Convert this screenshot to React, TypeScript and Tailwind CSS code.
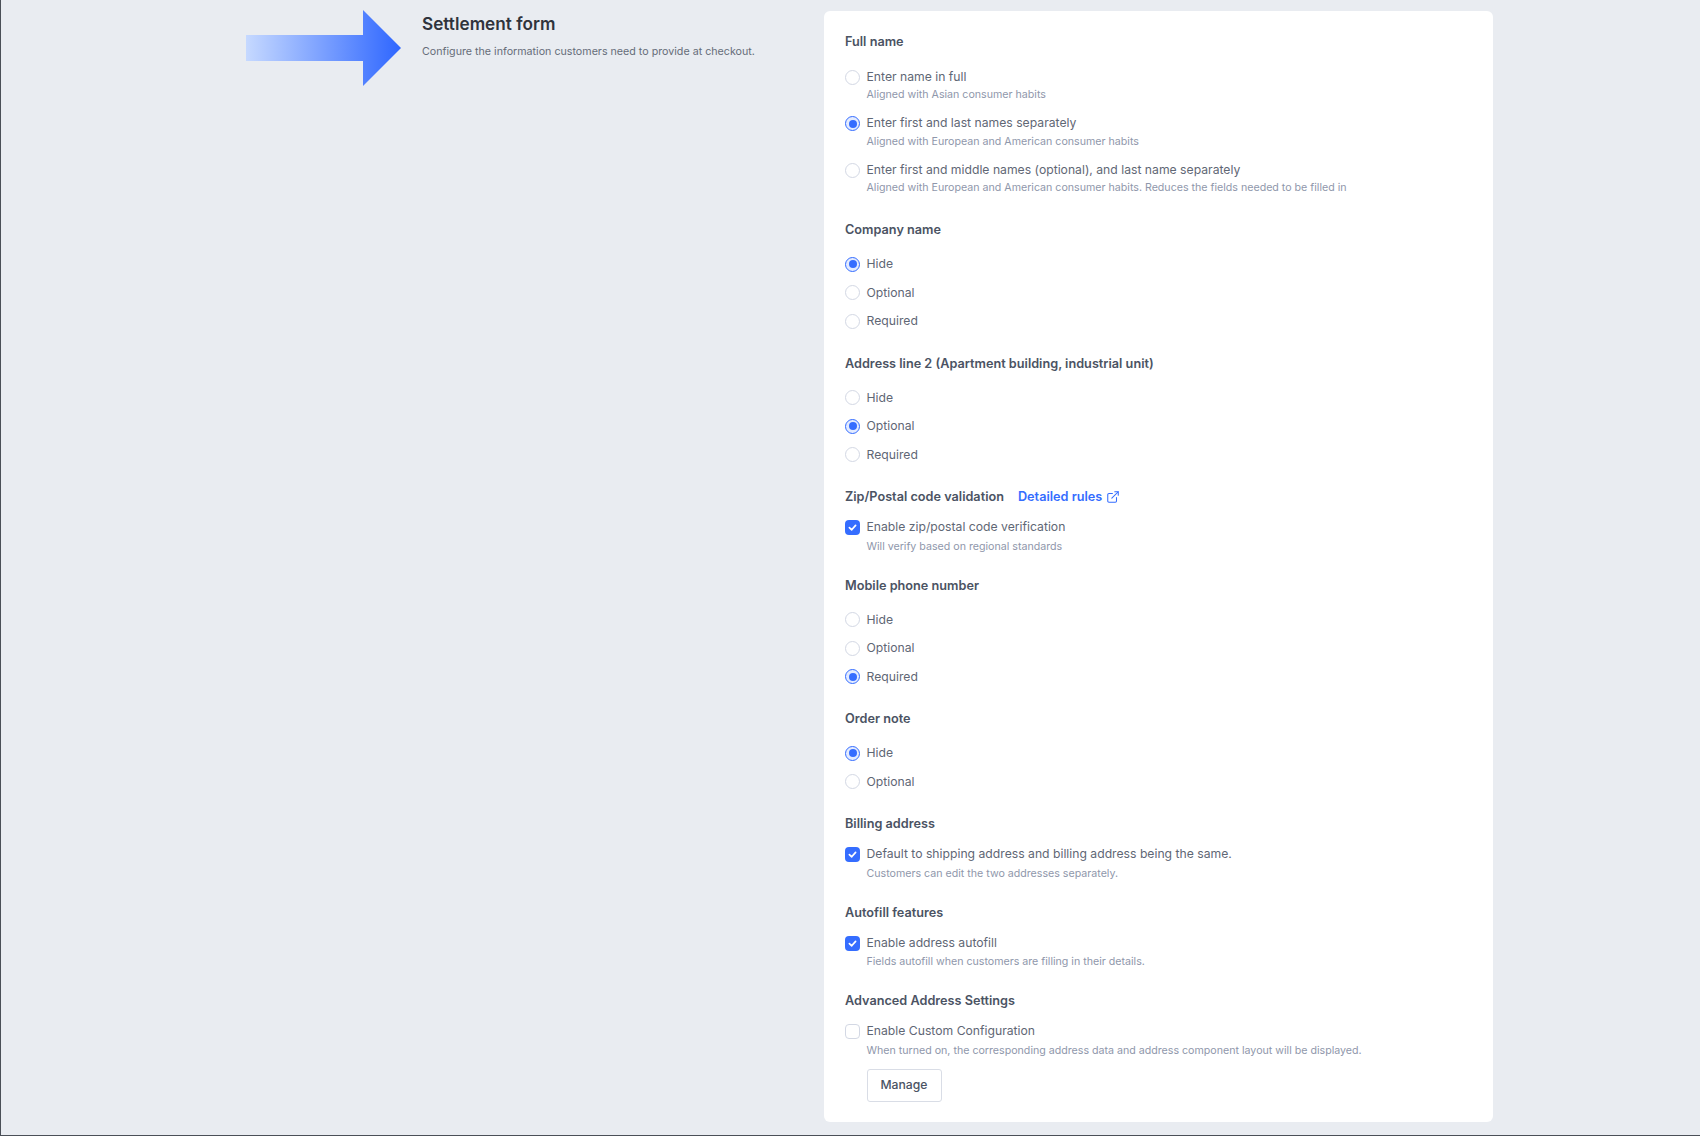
import { ExternalLink } from "lucide-react";

function Radio({ checked }: { checked?: boolean }) {
  if (checked) {
    return (
      <span className="w-[15px] h-[15px] rounded-full border-[1.5px] border-[#356dff] bg-[#e3ebff] flex items-center justify-center shrink-0">
        <span className="w-[8px] h-[8px] rounded-full bg-[#356dff]" />
      </span>
    );
  }
  return <span className="w-[15px] h-[15px] rounded-full border-[1.5px] border-[#d3d8e4] bg-white shrink-0" />;
}

function Check({ checked }: { checked?: boolean }) {
  if (checked) {
    return (
      <span className="w-[15px] h-[15px] rounded-[4px] bg-[#356dff] flex items-center justify-center shrink-0">
        <svg width="11" height="11" viewBox="0 0 11 11" fill="none">
          <path d="M2.4 5.6 4.7 7.8 8.6 3.4" stroke="white" strokeWidth="1.7" strokeLinecap="round" strokeLinejoin="round" />
        </svg>
      </span>
    );
  }
  return <span className="w-[15px] h-[15px] rounded-[4px] border-[1.5px] border-[#d3d8e4] bg-white shrink-0" />;
}

function Title({ children }: { children: React.ReactNode }) {
  return <p className="text-[12.7px] leading-[18px] font-semibold text-[#4b5363]">{children}</p>;
}

function RadioGroup({ title, options, selected }: { title: string; options: string[]; selected: number }) {
  return (
    <div className="mb-[19px]">
      <Title>{title}</Title>
      <div className="mt-[11px]">
        {options.map((o, i) => (
          <div key={o} className="h-[28.5px] flex items-center gap-[6.5px]">
            <Radio checked={i === selected} />
            <span className="text-[12.2px] text-[#5f6775]">{o}</span>
          </div>
        ))}
      </div>
    </div>
  );
}

function CheckRow({ label, hint, checked }: { label: string; hint: string; checked?: boolean }) {
  return (
    <div className="mt-[12.5px]">
      <div className="flex items-center gap-[6.5px] h-[18px]">
        <Check checked={checked} />
        <span className="text-[12.2px] text-[#5f6775]">{label}</span>
      </div>
      <p className="ml-[21.5px] mt-[1px] text-[10.65px] leading-[18px] text-[#8f97ab]">{hint}</p>
    </div>
  );
}

const fullName = [
  ["Enter name in full", "Aligned with Asian consumer habits"],
  ["Enter first and last names separately", "Aligned with European and American consumer habits"],
  [
    "Enter first and middle names (optional), and last name separately",
    "Aligned with European and American consumer habits. Reduces the fields needed to be filled in",
  ],
];

export default function App() {
  return (
    <div className="relative h-[1136px] bg-[#e9ecf1] border-l border-b border-[#4a4f57] font-['Inter',sans-serif] overflow-hidden">
      {/* Annotation arrow */}
      <svg className="absolute left-[245px] top-[10px]" width="157" height="76" viewBox="0 0 157 76">
        <defs>
          <linearGradient id="arrow" x1="0" x2="1" y1="0" y2="0">
            <stop offset="0" stopColor="#c6d9ff" />
            <stop offset="1" stopColor="#2e66ff" />
          </linearGradient>
        </defs>
        <path d="M0 25H117V0L155 38 117 76V51H0Z" fill="url(#arrow)" />
      </svg>

      <div className="flex pl-[421px] pt-[11px]">
        <div className="w-[402px] shrink-0">
          <h1 className="mt-[1px] text-[17.2px] leading-[24px] font-semibold text-[#2f333c]">Settlement form</h1>
          <p className="mt-[7px] text-[10.7px] leading-[18px] text-[#666d79]">
            Configure the information customers need to provide at checkout.
          </p>
        </div>

        <div className="w-[669px] h-[1111px] bg-white rounded-[6px] px-[21px] pt-[22px]">
          <div className="mb-[25px]">
            <Title>Full name</Title>
            <div className="mt-[17px] flex flex-col gap-[11.5px]">
              {fullName.map(([label, hint], i) => (
                <div key={label}>
                  <div className="flex items-center gap-[6.5px] h-[18px]">
                    <Radio checked={i === 1} />
                    <span className="text-[12.2px] text-[#5f6775]">{label}</span>
                  </div>
                  <p className="ml-[21.5px] text-[10.65px] leading-[17px] text-[#8f97ab]">{hint}</p>
                </div>
              ))}
            </div>
          </div>

          <RadioGroup title="Company name" options={["Hide", "Optional", "Required"]} selected={0} />
          <RadioGroup
            title="Address line 2 (Apartment building, industrial unit)"
            options={["Hide", "Optional", "Required"]}
            selected={1}
          />

          <div className="mb-[21px]">
            <div className="flex items-center gap-[14px]">
              <Title>Zip/Postal code validation</Title>
              <span className="flex items-center gap-[4px] text-[12.7px] leading-[18px] font-semibold text-[#356dff]">
                Detailed rules
                <ExternalLink size={14} strokeWidth={1.8} />
              </span>
            </div>
            <CheckRow
              checked
              label="Enable zip/postal code verification"
              hint="Will verify based on regional standards"
            />
          </div>

          <RadioGroup title="Mobile phone number" options={["Hide", "Optional", "Required"]} selected={2} />
          <RadioGroup title="Order note" options={["Hide", "Optional"]} selected={0} />

          <div className="mb-[21px]">
            <Title>Billing address</Title>
            <CheckRow
              checked
              label="Default to shipping address and billing address being the same."
              hint="Customers can edit the two addresses separately."
            />
          </div>

          <div className="mb-[21px]">
            <Title>Autofill features</Title>
            <CheckRow
              checked
              label="Enable address autofill"
              hint="Fields autofill when customers are filling in their details."
            />
          </div>

          <div>
            <Title>Advanced Address Settings</Title>
            <CheckRow
              label="Enable Custom Configuration"
              hint="When turned on, the corresponding address data and address component layout will be displayed."
            />
            <button className="ml-[21.5px] mt-[9px] w-[75px] h-[33px] rounded-[3px] border border-[#d9dde6] bg-white text-[12.2px] font-medium text-[#4b5363]">
              Manage
            </button>
          </div>
        </div>
      </div>
    </div>
  );
}
